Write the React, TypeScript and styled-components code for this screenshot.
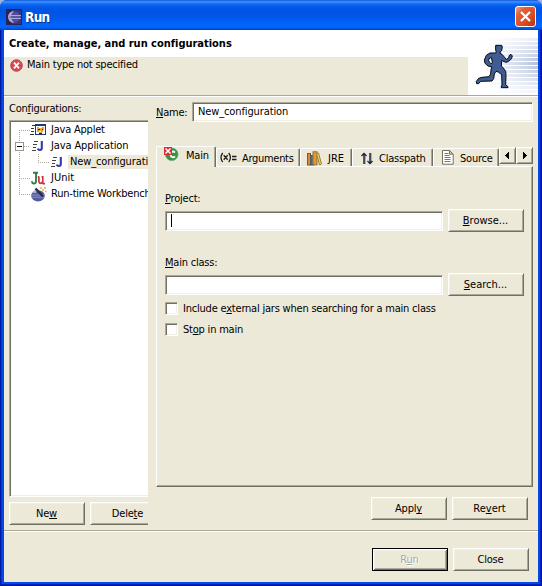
import React from "react";
import styled, { createGlobalStyle, css } from "styled-components";

const face = "#ece9d8";
const shadow = "#aca899";
const dark = "#716f64";
const light = "#f1efe2";

const Global = createGlobalStyle`
  html, body { margin: 0; padding: 0; background: #9db4dd; }
  * { box-sizing: border-box; }
  svg { display: block; flex: none; }
`;

const Window = styled.div`
  width: 542px;
  height: 586px;
  display: flex;
  flex-direction: column;
  overflow: hidden;
  border-radius: 7px 7px 0 0;
  background: #0a4ae0;
  font-family: "DejaVu Sans Condensed", "DejaVu Sans", sans-serif;
  font-stretch: condensed;
  font-size: 11px;
  line-height: 13px;
  color: #000;
`;

const TitleBar = styled.div`
  height: 30px;
  flex: none;
  display: flex;
  align-items: center;
  padding: 3px 6px 0 6px;
  background: linear-gradient(
    #0a46c8 0, #2f86fb 1px, #3b8dff 2px, #0e6af5 4px, #0457e6 7px, #0054e3 12px,
    #0058ea 18px, #0064fb 23px, #0066ff 26px, #005bec 28px, #0040c4 30px
  );
`;

const Title = styled.div`
  flex: 1;
  margin: 1px 0 0 3px;
  font-size: 13.5px;
  line-height: 16px;
  font-weight: bold;
  letter-spacing: -0.7px;
  color: #fff;
  text-shadow: 1px 1px 0 #0a2f8c;
`;

const CloseBox = styled.button`
  width: 21px;
  height: 21px;
  padding: 0;
  border: 1px solid #fff;
  border-radius: 3px;
  display: grid;
  place-items: center;
  background: linear-gradient(135deg, #f0a58c 0%, #e2603a 25%, #dd4a20 65%, #b93510 100%);
`;

const Frame = styled.div`
  flex: 1;
  display: flex;
  flex-direction: column;
  border-style: solid;
  border-width: 0 4px 4px;
  border-color: #0448e8;
  background: ${face};
  position: relative;
  &::before {
    content: "";
    position: absolute;
    inset: 0 -4px -4px;
    border: solid #0018a0;
    border-width: 0 1px 1px;
    box-shadow: inset 1px 0 #0a36d6, inset -1px -1px #0022b8;
    pointer-events: none;
  }
`;

const Header = styled.div`
  height: 65px;
  flex: none;
  display: flex;
  background: #fff;
`;

const HeaderText = styled.div`
  flex: 1;
`;

const Heading = styled.div`
  height: 27px;
  padding: 7px 0 0 5px;
`;

const Message = styled.div`
  height: 38px;
  display: flex;
  padding: 1px 0 0 6px;
  gap: 4px;
  background: ${face};
`;

const Text = styled.span<{ $ls?: number; $bold?: boolean; $disabled?: boolean }>`
  white-space: nowrap;
  letter-spacing: ${(p) => p.$ls ?? -0.21}px;
  font-weight: ${(p) => (p.$bold ? "bold" : "normal")};
  ${(p) => p.$disabled && css`color: ${shadow}; text-shadow: 1px 1px 0 #fff;`}
`;

const Key = styled.span`
  text-decoration: underline;
  text-decoration-thickness: 1px;
  text-underline-offset: 1px;
  text-decoration-skip-ink: none;
`;

const Rule = styled.div`
  height: 2px;
  flex: none;
  border-top: 1px solid ${shadow};
  background: #fff;
`;

const Main = styled.div`
  height: 433px;
  flex: none;
  display: flex;
`;

const Sidebar = styled.div`
  width: 144px;
  padding: 5px 0 0 5px;
  overflow: hidden;
  display: flex;
  flex-direction: column;
`;

const sunken = css`
  border: 1px solid;
  border-color: ${shadow} #fff #fff ${shadow};
  box-shadow: inset 1px 1px ${dark}, inset -1px -1px ${light};
  background: #fff;
`;

const Tree = styled.div`
  ${sunken}
  width: 180px;
  height: 377px;
  margin: 5px 0;
  padding: 1px;
  flex: none;
`;

const TreeRow = styled.div`
  display: flex;
  height: 16px;
  align-items: center;
`;

const IconSlot = styled.div`
  width: 19px;
  flex: none;
`;

const NodeLabel = styled.div<{ $selected?: boolean }>`
  padding-left: 2px;
  height: 14px;
  width: 110px;
  background: ${(p) => (p.$selected ? face : "transparent")};
`;

const Buttons = styled.div<{ $end?: boolean }>`
  display: flex;
  gap: 5px;
  justify-content: ${(p) => (p.$end ? "flex-end" : "flex-start")};
`;

const Button = styled.button<{ $default?: boolean }>`
  width: 76px;
  height: 23px;
  flex: none;
  padding: 0 1px 1px 0;
  font: inherit;
  color: inherit;
  background: ${face};
  border: 1px solid;
  border-color: #fff ${dark} ${dark} #fff;
  box-shadow: inset 1px 1px ${light}, inset -1px -1px ${shadow};
  ${(p) =>
    p.$default &&
    css`
      border-color: #000;
      box-shadow: inset 1px 1px #fff, inset -1px -1px ${dark}, inset 2px 2px ${light}, inset -2px -2px ${shadow};
    `}
`;

const Detail = styled.div`
  flex: 1;
  padding: 5px 5px 0 8px;
`;

const Field = styled.div`
  display: flex;
  align-items: center;
`;

const NameLabel = styled.div`
  width: 36px;
  padding-top: 1px;
`;

const Input = styled.div`
  ${sunken}
  flex: 1;
  height: 20px;
  padding: 2px 5px;
`;

const Caret = styled.div`
  width: 1px;
  height: 13px;
  background: #000;
`;

const TabStrip = styled.div`
  display: flex;
  height: 20px;
  margin-top: 24px;
  align-items: flex-end;
`;

const Tab = styled.div<{ $active?: boolean; $w: number; $pad: number; $gap: number }>`
  width: ${(p) => p.$w}px;
  height: ${(p) => (p.$active ? 21 : 18)}px;
  margin-bottom: ${(p) => (p.$active ? -1 : 0)}px;
  flex: none;
  position: relative;
  overflow: hidden;
  display: flex;
  align-items: flex-start;
  gap: ${(p) => p.$gap}px;
  padding: ${(p) => (p.$active ? 0 : 1)}px 0 0 ${(p) => p.$pad}px;
  background: ${face};
  border-style: solid;
  border-width: 1px 1px 0;
  border-color: #fff ${dark} #fff #fff;
  border-radius: 2px 2px 0 0;
  box-shadow: inset -1px 0 ${shadow};
  z-index: ${(p) => (p.$active ? 1 : 0)};
`;

const TabText = styled(Text)`
  padding-top: 2px;
`;

const Scroller = styled.div`
  display: flex;
  height: 20px;
  padding-top: 1px;
`;

const ScrollButton = styled(Button)`
  width: 17px;
  height: 17px;
  padding: 0;
  display: grid;
  place-items: center;
`;

const Panel = styled.div`
  height: 321px;
  padding: 25px 8px 0 8px;
  border: 1px solid;
  border-color: #fff ${dark} ${dark} #fff;
  box-shadow: inset -1px -1px ${shadow};
`;

const PanelField = styled(Field)<{ $after: number }>`
  gap: 5px;
  margin: 4px 0 ${(p) => p.$after}px;
`;

const Option = styled.div`
  display: flex;
  align-items: center;
  height: 13px;
  gap: 5px;
  margin-bottom: 8px;
`;

const Check = styled.div`
  ${sunken}
  width: 13px;
  height: 13px;
`;

const DetailActions = styled(Buttons)`
  margin: 10px 5px 0 0;
`;

const Footer = styled.div`
  padding: 16px 9px 0 0;
`;

const Ico = styled.svg<{ $ml?: number; $mt?: number }>`
  margin-left: ${(p) => p.$ml ?? 0}px;
  margin-top: ${(p) => p.$mt ?? 0}px;
`;

const EclipseIcon = () => (
  <Ico width="16" height="16" viewBox="0 0 16 16">
    <rect width="16" height="16" fill="#2a2358" />
    <rect x="6" y="1" width="9" height="14" fill="#3b3379" />
    <circle cx="8.5" cy="8" r="5.6" fill="#514e9a" />
    <path d="M8 2A6 6 0 0 0 8 14 8 8 0 0 1 5 8 8 8 0 0 1 8 2" fill="#b3aed8" />
    <path d="M3 6.5h12M3 9.5h12" stroke="#aaa7dc" />
    <path d="M3 8h12" stroke="#6761aa" />
  </Ico>
);

const ErrorIcon = () => (
  <Ico width="13" height="13" viewBox="0 0 13 13" $mt={1}>
    <circle cx="6.5" cy="6.5" r="5.8" fill="#e5414f" stroke="#a7525c" />
    <path d="M4 3.7l5 5.6M9 3.7l-5 5.6" stroke="#fff" strokeWidth="1.8" />
  </Ico>
);

const streaks = Array.from({ length: 15 }, (_, i) => i);

const Runner = () => (
  <Ico width="70" height="65" viewBox="24 0 210 195">
    <defs>
      <linearGradient id="streak" x1="0" x2="1">
        <stop offset="0" stopColor="#b9c6e0" stopOpacity="0" />
        <stop offset="1" stopColor="#b4c1de" />
      </linearGradient>
    </defs>
    {streaks.map((i) => (
      <rect key={i} x={75} y={24 + i * 12} width={159} height={9}
        fill="url(#streak)" opacity={1 - Math.abs(i - 6) / 8.5} />
    ))}
    <path
      fillRule="evenodd"
      fill="#3f5d92" stroke="#05070d" strokeWidth="3"
      d="M107 46H125L127 50 125 62 121 65 120 70 126 73 132 80 139 88 146 84 148 76 153 73 157 78 155 85 150 91 140 97 132 95 125 91 124 108 130 114 137 124 138 134 137 164 144 170V173H124V168L126 165 125 134 115 126 108 124 103 132 101 146 96 153 62 154 56 161H50L49 154 56 145 66 142 87 140 92 132 93 118 96 111 84 108 75 100 73 90 79 76 90 69 106 69 109 66 107 60ZM94 82L87 86 86 92 90 98 94 102 97 97Z"
    />
  </Ico>
);

const Guide = ({ d, w = 19, box = false }: { d: string; w?: number; box?: boolean }) => (
  <Ico width={w} height="16" viewBox={`0 0 ${w} 16`} shapeRendering="crispEdges">
    <path d={d} stroke="#aca899" strokeDasharray="1 1" fill="none" />
    {box && (
      <>
        <rect x="4.5" y="4.5" width="8" height="8" fill="#fff" stroke="#98968a" />
        <path d="M6 8.5h5" stroke="#000" />
      </>
    )}
  </Ico>
);

const JavaIcon = ({ ml = 0 }: { ml?: number }) => (
  <Ico width="12" height="12" viewBox="0 0 12 12" $ml={ml}>
    <path d="M2 1.5h4M1 4.5h4M1 7.5h3M0 10.5h4" stroke="#444" shapeRendering="crispEdges" />
    <path d="M9.8 1V8Q9.8 10 7.9 10 6.3 10 5.6 8.6" fill="none" stroke="#3139ad" strokeWidth="2.1" />
  </Ico>
);

const AppletIcon = () => (
  <Ico width="16" height="12" viewBox="0 0 16 12" shapeRendering="crispEdges">
    <path d="M2 1.5h3M1 4.5h3M1 7.5h3M0 10.5h4" stroke="#333" />
    <rect x="5" y="0" width="11" height="11" fill="#173f73" />
    <rect x="6" y="2" width="9" height="8" fill="#f4f8fb" />
    <path d="M7 3h2v1h3V3h2v3h-1v2h-1v1H9V8H7V5z" fill="#e9a52c" />
    <path d="M8 5h2v1H8zM12 5h1v1h-1zM9 9h3v1H9z" fill="#222" />
    <path d="M9 7h2v1H9z" fill="#fff1a8" />
  </Ico>
);

const JUnitIcon = () => (
  <Ico width="15" height="15" viewBox="0 0 15 15" $ml={1}>
    <path d="M2 1.7h5M5 1V10Q5 12.6 2.8 12.6 1 12.6 1 10.3" fill="none" stroke="#2f8049" strokeWidth="1.9" />
    <path d="M7.9 6V9.8Q7.9 12.4 9.6 12.4 11.8 12.2 11.8 9.6V5.6V13M6.8 5.8h1.6M10.6 5.8h2M11.5 12.6h2.5" fill="none" stroke="#cf3640" strokeWidth="1.7" />
  </Ico>
);

const WorkbenchIcon = () => (
  <Ico width="16" height="15" viewBox="0 0 16 15" $ml={1}>
    <ellipse cx="7" cy="8.8" rx="6.8" ry="5.6" fill="#555b9b" />
    <path d="M1 8h12M1 10.2h12" stroke="#969fce" strokeWidth=".8" />
    <path d="M1.5 6Q4 2 7 3L5 6Z" fill="#a5add6" />
    <path d="M4.5 1.5L12 9.5" stroke="#2b2949" strokeWidth="2.4" />
    <path d="M9 1h2M13 1h2M11 3h2M14 4.5h1.5" stroke="#e9b13c" strokeWidth="1.4" />
  </Ico>
);

const MainIcon = () => (
  <Ico width="15" height="15" viewBox="0 0 15 15">
    <circle cx="7.7" cy="7.3" r="6.3" fill="#359344" stroke="#68a574" strokeWidth=".7" />
    <path d="M11 5.5Q9.2 3.6 7.3 5.2 5.8 7.6 7.4 9.6 9.3 11 11 9.3" fill="none" stroke="#fff" strokeWidth="1.8" />
    <rect x="0" y="0" width="8" height="8" fill="#db2e32" />
    <path d="M1.5 1.5l5 5M6.5 1.5l-5 5" stroke="#fff" strokeWidth="1.5" />
  </Ico>
);

const VariableIcon = () => (
  <Ico width="17" height="12" viewBox="0 0 17 12" $mt={2}>
    <path d="M2.7 1Q-.7 5.5 2.7 10M8.7 1Q12.1 5.5 8.7 10M3.7 3.3l4 4.4M7.7 3.3l-4 4.4M12 4.5h4.5M12 7.5h4.5" fill="none" stroke="#1b1b1b" strokeWidth="1.3" />
  </Ico>
);

const BooksIcon = () => (
  <Ico width="15" height="15" viewBox="0 0 15 15" $mt={1}>
    <rect x=".5" y="2.5" width="3" height="11.5" fill="#d58a3d" stroke="#8b5525" />
    <rect x="4" y="4.5" width="2.5" height="9.5" fill="#3f8ba5" stroke="#285c88" />
    <rect x="6" y=".8" width="4" height="13" fill="#e09a3d" stroke="#a16a23" />
    <path d="M9.5 2.7l2-.7 3 11-2 .9z" fill="#e8d070" stroke="#9b8235" />
  </Ico>
);

const ArrowsIcon = () => (
  <Ico width="12" height="13" viewBox="0 0 12 13" $mt={2}>
    <path d="M3.5 12V2M9.5 1v10" stroke="#8287a5" strokeWidth="2.2" />
    <path d="M3 12V1.5M.5 4L3 1.3 5.5 4M9 1v10.3M6.5 9L9 11.6 11.5 9" fill="none" stroke="#172333" strokeWidth="1.2" />
  </Ico>
);

const SourceIcon = () => (
  <Ico width="12" height="15" viewBox="0 0 12 15">
    <path d="M.5 .5H7.5L11.2 4.2V14.2H.5Z" fill="#fff" stroke="#74735e" />
    <path d="M7.5 .5V4.2h3.7z" fill="#d8c992" stroke="#74735e" />
    <path d="M2.5 3.5h4M2.5 5.5h5M2.5 7.5h6M2.5 9.5h6M2.5 11.5h6" stroke="#3b928f" />
  </Ico>
);

const Arrow = ({ d }: { d: string }) => (
  <Ico width="6" height="8" viewBox="0 0 6 8" shapeRendering="crispEdges"><path d={d} /></Ico>
);

export default function App() {
  return (
    <Window>
      <Global />
      <TitleBar>
        <EclipseIcon />
        <Title>Run</Title>
        <CloseBox aria-label="Close">
          <svg width="13" height="13" viewBox="0 0 13 13">
            <path d="M2 2l9 9M11 2l-9 9" stroke="#fff" strokeWidth="2.2" />
          </svg>
        </CloseBox>
      </TitleBar>
      <Frame>
        <Header>
          <HeaderText>
            <Heading><Text $bold $ls={-0.02}>Create, manage, and run configurations</Text></Heading>
            <Message>
              <ErrorIcon />
              <Text>Main type not specified</Text>
            </Message>
          </HeaderText>
          <Runner />
        </Header>
        <Rule />
        <Main>
          <Sidebar>
            <Text>Con<Key>f</Key>igurations:</Text>
            <Tree>
              <TreeRow>
                <Guide d="M8.5 8V16M8 8.5H19" />
                <IconSlot><AppletIcon /></IconSlot>
                <NodeLabel><Text>Java Applet</Text></NodeLabel>
              </TreeRow>
              <TreeRow>
                <Guide d="M8.5 0V16M13 8.5H19" box />
                <IconSlot><JavaIcon ml={2} /></IconSlot>
                <NodeLabel><Text $ls={-0.12}>Java Application</Text></NodeLabel>
              </TreeRow>
              <TreeRow>
                <Guide w={38} d="M8.5 0V16M27.5 0V8M27 8.5H38" />
                <IconSlot><JavaIcon ml={2} /></IconSlot>
                <NodeLabel $selected><Text $ls={-0.12}>New_configuration</Text></NodeLabel>
              </TreeRow>
              <TreeRow>
                <Guide d="M8.5 0V16M8 8.5H19" />
                <IconSlot><JUnitIcon /></IconSlot>
                <NodeLabel><Text $ls={0}>JUnit</Text></NodeLabel>
              </TreeRow>
              <TreeRow>
                <Guide d="M8.5 0V8M8 8.5H19" />
                <IconSlot><WorkbenchIcon /></IconSlot>
                <NodeLabel><Text>Run-time Workbench</Text></NodeLabel>
              </TreeRow>
            </Tree>
            <Buttons>
              <Button><Text>Ne<Key>w</Key></Text></Button>
              <Button><Text>Dele<Key>t</Key>e</Text></Button>
            </Buttons>
          </Sidebar>
          <Detail>
            <Field>
              <NameLabel><Text><Key>N</Key>ame:</Text></NameLabel>
              <Input><Text $ls={-0.12}>New_configuration</Text></Input>
            </Field>
            <TabStrip>
              <Tab $active $w={60} $pad={7} $gap={7}>
                <MainIcon /><TabText>Main</TabText>
              </Tab>
              <Tab $w={84} $pad={3} $gap={5}>
                <VariableIcon /><TabText $ls={-0.3}>Arguments</TabText>
              </Tab>
              <Tab $w={52} $pad={6} $gap={6}>
                <BooksIcon /><TabText $ls={0}>JRE</TabText>
              </Tab>
              <Tab $w={81} $pad={8} $gap={6}>
                <ArrowsIcon /><TabText>Classpath</TabText>
              </Tab>
              <Tab $w={66} $pad={8} $gap={6}>
                <SourceIcon /><TabText>Source</TabText>
              </Tab>
              <Scroller>
                <ScrollButton aria-label="Scroll left"><Arrow d="M4 0V7H3V6H2V5H1V4H0V3H1V2H2V1H3V0Z" /></ScrollButton>
                <ScrollButton aria-label="Scroll right"><Arrow d="M1 0V7H2V6H3V5H4V4H5V3H4V2H3V1H2V0Z" /></ScrollButton>
              </Scroller>
            </TabStrip>
            <Panel>
              <Text><Key>P</Key>roject:</Text>
              <PanelField $after={24}>
                <Input><Caret /></Input>
                <Button><Text $ls={0}><Key>B</Key>rowse...</Text></Button>
              </PanelField>
              <Text><Key>M</Key>ain class:</Text>
              <PanelField $after={6}>
                <Input />
                <Button><Text $ls={0}><Key>S</Key>earch...</Text></Button>
              </PanelField>
              <Option><Check /><Text>Include e<Key>x</Key>ternal jars when searching for a main class</Text></Option>
              <Option><Check /><Text>St<Key>o</Key>p in main</Text></Option>
            </Panel>
            <DetailActions $end>
              <Button><Text>Appl<Key>y</Key></Text></Button>
              <Button><Text $ls={0}>Re<Key>v</Key>ert</Text></Button>
            </DetailActions>
          </Detail>
        </Main>
        <Rule />
        <Footer>
          <Buttons $end>
            <Button $default><Text $disabled>R<Key>u</Key>n</Text></Button>
            <Button><Text>Close</Text></Button>
          </Buttons>
        </Footer>
      </Frame>
    </Window>
  );
}
